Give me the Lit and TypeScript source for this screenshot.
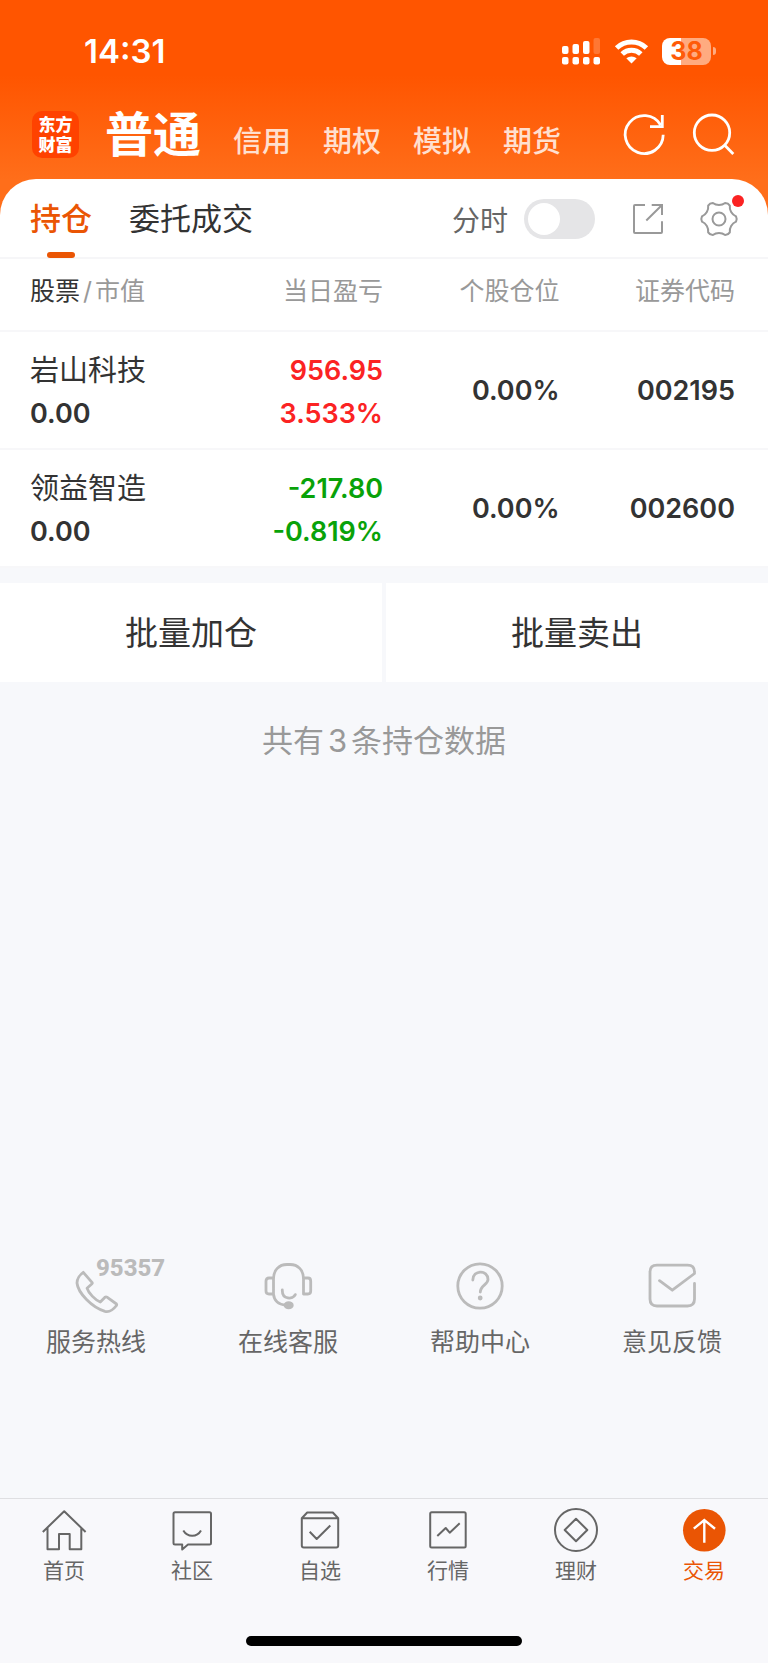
import { LitElement, html, css, svg } from "lit";
import { customElement, state } from "lit/decorators.js";
import { classMap } from "lit/directives/class-map.js";

interface Holding {
  name: string;
  value: string;
  profit: string;
  rate: string;
  share: string;
  code: string;
}

const accounts = ["普通", "信用", "期权", "模拟", "期货"];

const holdings: Holding[] = [
  { name: "岩山科技", value: "0.00", profit: "956.95", rate: "3.533%", share: "0.00%", code: "002195" },
  { name: "领益智造", value: "0.00", profit: "-217.80", rate: "-0.819%", share: "0.00%", code: "002600" },
];

// Outline of the settings gear: six blunt teeth joined by concave curves.
const gearPath = (() => {
  const at = (deg: number, r: number) => {
    const t = (deg * Math.PI) / 180;
    return `${(18 + r * Math.cos(t)).toFixed(2)} ${(18 + r * Math.sin(t)).toFixed(2)}`;
  };
  const teeth = [0, 60, 120, 180, 240, 300].map(
    (a) => `Q${at(a, 18.4)} ${at(a + 9, 17.2)}C${at(a + 19, 13.6)} ${at(a + 41, 13.6)} ${at(a + 51, 17.2)}`
  );
  return `M${at(-9, 17.2)}${teeth.join("")}Z`;
})();

const services = [
  {
    label: "服务热线",
    badge: "95357",
    icon: svg`<path d="M11.3 10.3 20.2 20.6Q20.6 21.2 20 21.8L15 26.2C16.500 31 23 38 28.300 40L33 35.200Q34 34.500 35 35.200L44.500 42Q45 42.700 44.500 43.500C41 48 37 50.300 33 49.300C20 45.500 6 31 5 21C5 17 8 12.500 11.300 10.300Z"/>`,
  },
  {
    label: "在线客服",
    badge: "",
    icon: svg`<path d="M9.500 32V17C9.500 8 15 2.500 23 2.500H26C34 2.500 39.500 8 39.500 17V32H44Q46.700 32 46.700 29V19Q46.700 16 44 16H39.500M9.500 16H5Q2 16 2 19V29Q2 32 5 32H9.500C10 38 14 42.500 22 43.300M18.300 28C18 38 29 37.500 31.300 32.600"/><ellipse class="solid" cx="24.700" cy="43.300" rx="3.600" ry="2.600"/>`,
  },
  {
    label: "帮助中心",
    badge: "",
    icon: svg`<circle cx="24" cy="24" r="22.200"/><path d="M16.800 18C16.800 7.500 32 7.500 32 17.500C32 22.500 24.300 23.500 24.300 30"/><circle class="solid" cx="24.200" cy="36" r="1"/>`,
  },
  {
    label: "意见反馈",
    badge: "",
    icon: svg`<path d="M46.500 21.500V37Q46.500 44 39.500 44H9Q2 44 2 37V10Q2 3.200 9 3.200H39.500Q46.500 3.200 46.500 10V11.500L24.300 28.200 11.500 18.700"/>`,
  },
];

const navItems = [
  { label: "首页", active: false, icon: svg`<path d="M.8 24 22.200 3.200 43.600 24M5.500 20V41.300H17V26H27.700V41.300H39.300V20"/>` },
  {
    label: "社区",
    active: false,
    icon: svg`<path d="M5 4.200H39.500Q41 4.200 41 5.700V35Q41 36.500 39.500 36.500H18L12.200 41.500V36.500H5Q3.500 36.500 3.500 35V5.700Q3.500 4.200 5 4.200ZM13.300 22.500C17.500 29.500 27 29.500 31 22.500"/>`,
  },
  {
    label: "自选",
    active: false,
    icon: svg`<path d="M3.800 10.300 9.200 4.500H34.800L40.200 10.300V37.500Q40.200 39.500 38.200 39.500H5.800Q3.800 39.500 3.800 37.500ZM3.800 10.300H40.200M11.700 23.700 18.700 31 32.300 17.500"/>`,
  },
  {
    label: "行情",
    active: false,
    icon: svg`<rect x="4.200" y="4.200" width="35.500" height="35.300" rx="1.500"/><path d="M11.300 28 19.700 20 23.700 24.700 33.700 15.300"/>`,
  },
  {
    label: "理财",
    active: false,
    icon: svg`<circle cx="22" cy="22" r="21"/><path d="M22 10.700 33.300 22 22 33.300 10.700 22Z"/>`,
  },
  {
    label: "交易",
    active: true,
    icon: svg`<circle class="disc" cx="22.300" cy="22.300" r="21.300"/><path class="arrow" d="M22.300 34.700V12M11.800 20.700 22.300 12 33 20.700"/>`,
  },
];

@customElement("app-root")
export class AppRoot extends LitElement {
  @state() private account = 0;
  @state() private tab = 0;

  static styles = css`
    :host {
      display: flex;
      flex-direction: column;
      min-height: 100vh;
      background: #f7f8fb;
      color: #333;
      font-family: Inter, "Noto Sans CJK SC", sans-serif;
    }
    * {
      box-sizing: border-box;
    }
    button {
      border: 0;
      padding: 0;
      background: none;
      font: inherit;
      color: inherit;
      cursor: pointer;
    }
    a {
      color: inherit;
      text-decoration: none;
    }
    svg {
      display: block;
      flex: none;
      fill: none;
      overflow: visible;
    }

    .top {
      background: linear-gradient(#ff5500 75px, #ff6e1a 180px);
    }
    .status {
      display: flex;
      align-items: center;
      height: 102px;
      padding: 0 52px 0 84px;
      color: #fff;
    }
    .time {
      flex: 1;
      font-size: 33px;
      font-weight: 600;
    }
    .signs {
      display: flex;
      align-items: center;
      gap: 14px;
    }
    .signs svg {
      fill: #fff;
    }
    .signs .arcs {
      fill: none;
      stroke: #fff;
      stroke-width: 5;
    }
    .faint {
      opacity: 0.2;
    }
    .battery {
      display: flex;
      align-items: center;
      gap: 2px;
    }
    .cell {
      width: 49px;
      height: 27px;
      border-radius: 8px;
      background: linear-gradient(90deg, #fff 38%, #ffab80 38%);
      color: #ff5b08;
      font-size: 25px;
      font-weight: 700;
      line-height: 27px;
      text-align: center;
    }
    .nub {
      width: 3px;
      height: 8px;
      border-radius: 0 4px 4px 0;
      background: #ffab80;
    }

    .header {
      display: flex;
      align-items: center;
      height: 77px;
      padding: 0 35px 13px 32px;
      color: #fff;
    }
    .logo {
      width: 47px;
      height: 47px;
      border-radius: 10px;
      background: #ff4200;
      font-size: 17px;
      font-weight: 900;
      line-height: 20px;
      padding-top: 4px;
      text-align: center;
    }
    .accounts {
      display: flex;
      flex: 1;
      align-items: baseline;
      gap: 32px;
      padding: 8px 0 0 26px;
      line-height: 64px;
    }
    .accounts button {
      font-size: 29px;
      font-weight: 500;
      opacity: 0.8;
    }
    .accounts .current {
      font-size: 48px;
      font-weight: 700;
      opacity: 1;
    }
    .tools {
      display: flex;
      gap: 29px;
    }
    .tools svg {
      stroke: #fff;
      stroke-width: 2.800;
    }

    .tabs {
      display: flex;
      align-items: stretch;
      height: 80px;
      padding: 0 31px 0 30px;
      border-radius: 36px 36px 0 0;
      border-bottom: 2px solid #f6f6f8;
      background: #fff;
    }
    .tab {
      position: relative;
      margin-right: 37px;
      padding-bottom: 3px;
      font-size: 31px;
    }
    .tab.current {
      color: #ea5504;
      font-weight: 500;
    }
    .tab.current::after {
      content: "";
      position: absolute;
      left: 50%;
      bottom: -1px;
      width: 28px;
      height: 6px;
      margin-left: -14px;
      border-radius: 3px;
      background: #ea5504;
    }
    .actions {
      display: flex;
      flex: 1;
      align-items: center;
      justify-content: flex-end;
      gap: 38px;
      padding-top: 2px;
    }
    .mode {
      display: flex;
      align-items: center;
      gap: 16px;
      font-size: 28px;
      color: #666;
    }
    .switch {
      appearance: none;
      width: 71px;
      height: 40px;
      margin: 0;
      padding: 4px;
      border-radius: 20px;
      background: #e5e5e7;
    }
    .switch::before {
      content: "";
      display: block;
      width: 32px;
      height: 32px;
      border-radius: 50%;
      background: #fff;
    }
    .switch:checked {
      background: #ea5504;
    }
    .switch:checked::before {
      margin-left: auto;
    }
    .actions svg {
      stroke: #999;
      stroke-width: 2;
    }
    .settings {
      position: relative;
    }
    .dot {
      position: absolute;
      top: -6px;
      right: -7px;
      width: 12px;
      height: 12px;
      border-radius: 50%;
      background: #fb2323;
    }

    table {
      width: 100%;
      table-layout: fixed;
      border-collapse: collapse;
      background: #fff;
      font-size: 27px;
      font-weight: 600;
    }
    th {
      height: 72px;
      padding: 0 1px 12px 0;
      font-size: 25px;
      font-weight: 400;
      color: #999;
      text-align: right;
      white-space: nowrap;
    }
    td {
      height: 118px;
      padding: 0 1px 0 0;
      text-align: right;
    }
    tr {
      border-bottom: 2px solid #f7f7f9;
    }
    .wide {
      width: 25%;
    }
    .narrow {
      width: 23%;
    }
    th:first-child,
    td:first-child {
      padding-left: 30px;
      text-align: left;
    }
    th:last-child,
    td:last-child {
      padding-right: 33px;
    }
    .strong {
      color: #333;
    }
    .slash {
      margin: 0 3px;
    }
    .pair {
      display: grid;
      grid-auto-rows: 43px;
      padding-top: 4px;
      line-height: 43px;
    }
    .name {
      font-size: 29px;
      font-weight: 400;
    }
    .up {
      color: #fb2323;
    }
    .down {
      color: #09a209;
    }

    .batch {
      display: grid;
      grid-template-columns: 1fr 1fr;
      gap: 4px;
      margin-top: 15px;
    }
    .batch button {
      height: 99px;
      padding-bottom: 3px;
      background: #fff;
      font-size: 33px;
    }
    .count {
      display: flex;
      justify-content: center;
      gap: 4px;
      margin: 36px 0 0;
      font-size: 31px;
      line-height: 46px;
      color: #999;
    }

    .services {
      display: grid;
      grid-template-columns: repeat(4, 1fr);
      margin-top: auto;
      padding: 40px 0 136px;
    }
    .service {
      position: relative;
      display: flex;
      flex-direction: column;
      align-items: center;
      gap: 12px;
      font-size: 25px;
      line-height: 40px;
      color: #666;
    }
    .service svg {
      stroke: #bbb;
      stroke-width: 2.800;
      stroke-linecap: round;
      stroke-linejoin: round;
    }
    .solid {
      fill: #bbb;
    }
    .hotline {
      position: absolute;
      left: 50%;
      top: -10px;
      font-family: Roboto, sans-serif;
      font-size: 24px;
      font-weight: 800;
      line-height: 32px;
      color: #bbb;
    }

    .nav {
      border-top: 1px solid #dfdfe2;
      background: #f8f8fb;
    }
    .items {
      display: grid;
      grid-template-columns: repeat(6, 1fr);
      padding-top: 9px;
    }
    .item {
      display: flex;
      flex-direction: column;
      align-items: center;
      gap: 4px;
      font-size: 21px;
      line-height: 30px;
      color: #666;
    }
    .item svg {
      stroke: #666;
      stroke-width: 2;
      stroke-linejoin: round;
    }
    .item.active {
      color: #ea5504;
    }
    .item .disc {
      fill: #ea5504;
      stroke: none;
    }
    .item .arrow {
      stroke: #fff;
      stroke-width: 2.400;
      stroke-linejoin: miter;
    }
    .home-bar {
      width: 36%;
      height: 10px;
      margin: 50px auto 17px;
      border-radius: 5px;
      background: #000;
    }
  `;

  render() {
    return html`
      <div class="top">
        <div class="status">
          <span class="time">14:31</span>
          <div class="signs">
            <svg width="39" height="28" viewBox="0 0 39 28">
              ${[0, 10.5, 21, 31.5].map((x) => svg`<rect x=${x} y="20" width="6.500" height="7.500" rx="2"/>`)}
              <rect x="0" y="9" width="6.500" height="8" rx="2" />
              <rect x="10.500" y="7" width="6.500" height="10" rx="2" />
              <rect x="21" y="4" width="6.500" height="13" rx="2" />
              <rect class="faint" x="31.500" y="1" width="6.500" height="16" rx="2" />
            </svg>
            <svg width="33" height="25" viewBox="0 0 33 25">
              <path class="arcs" d="M1.600 9A21.500 21.500 0 0 1 31.400 9M7.200 15A13.500 13.500 0 0 1 25.800 15" />
              <path d="M16.500 24.500 11.300 19.300A8 8 0 0 1 21.700 19.300Z" />
            </svg>
            <div class="battery"><span class="cell">38</span><span class="nub"></span></div>
          </div>
        </div>

        <header class="header">
          <div class="logo">东方<br />财富</div>
          <nav class="accounts">
            ${accounts.map(
              (name, i) => html`<button
                class=${classMap({ current: i === this.account })}
                @click=${() => (this.account = i)}
              >${name}</button>`
            )}
          </nav>
          <div class="tools">
            <button aria-label="刷新">
              <svg width="40" height="40" viewBox="0 0 40 40">
                <path d="M39.200 20.800A19 19 0 1 1 36.600 11M38.300 1V12.700H26" />
              </svg>
            </button>
            <button aria-label="搜索">
              <svg width="40" height="40" viewBox="0 0 40 40">
                <circle cx="19" cy="18.700" r="17.700" />
                <path d="M31.500 31 40.300 40" />
              </svg>
            </button>
          </div>
        </header>

        <div class="tabs">
          ${["持仓", "委托成交"].map(
            (name, i) => html`<button
              class=${classMap({ tab: true, current: i === this.tab })}
              @click=${() => (this.tab = i)}
            >${name}</button>`
          )}
          <div class="actions">
            <label class="mode">分时<input class="switch" type="checkbox" role="switch" /></label>
            <button aria-label="分享">
              <svg width="30" height="30" viewBox="0 0 30 30">
                <path d="M12 1H2Q1 1 1 2V28Q1 29 2 29H28Q29 29 29 28V17.300M18.700 1H29V11M29 1 13.300 16.500" />
              </svg>
            </button>
            <button class="settings" aria-label="设置">
              <svg width="36" height="36" viewBox="0 0 36 36">
                <path d=${gearPath} />
                <circle cx="18" cy="18" r="6.500" />
              </svg>
              <span class="dot"></span>
            </button>
          </div>
        </div>
      </div>

      <table>
        <thead>
          <tr>
            <th class="wide" scope="col"><span class="strong">股票</span><span class="slash">/</span>市值</th>
            <th class="wide" scope="col">当日盈亏</th>
            <th class="narrow" scope="col">个股仓位</th>
            <th scope="col">证券代码</th>
          </tr>
        </thead>
        <tbody>
          ${holdings.map(
            (h) => html`<tr>
              <td><div class="pair"><span class="name">${h.name}</span><span>${h.value}</span></div></td>
              <td>
                <div class="pair ${h.profit.startsWith("-") ? "down" : "up"}">
                  <span>${h.profit}</span><span>${h.rate}</span>
                </div>
              </td>
              <td>${h.share}</td>
              <td>${h.code}</td>
            </tr>`
          )}
        </tbody>
      </table>

      <div class="batch">
        <button>批量加仓</button>
        <button>批量卖出</button>
      </div>
      <p class="count"><span>共有</span><span>3</span><span>条持仓数据</span></p>

      <section class="services">
        ${services.map(
          (s) => html`<a class="service" href="#">
            <svg width="48" height="48" viewBox="0 0 48 48">${s.icon}</svg>
            ${s.badge ? html`<span class="hotline">${s.badge}</span>` : ""}
            <span>${s.label}</span>
          </a>`
        )}
      </section>

      <nav class="nav">
        <div class="items">
          ${navItems.map(
            (n) => html`<a class=${classMap({ item: true, active: n.active })} href="#">
              <svg width="44" height="44" viewBox="0 0 44 44">${n.icon}</svg>
              <span>${n.label}</span>
            </a>`
          )}
        </div>
        <div class="home-bar"></div>
      </nav>
    `;
  }
}
